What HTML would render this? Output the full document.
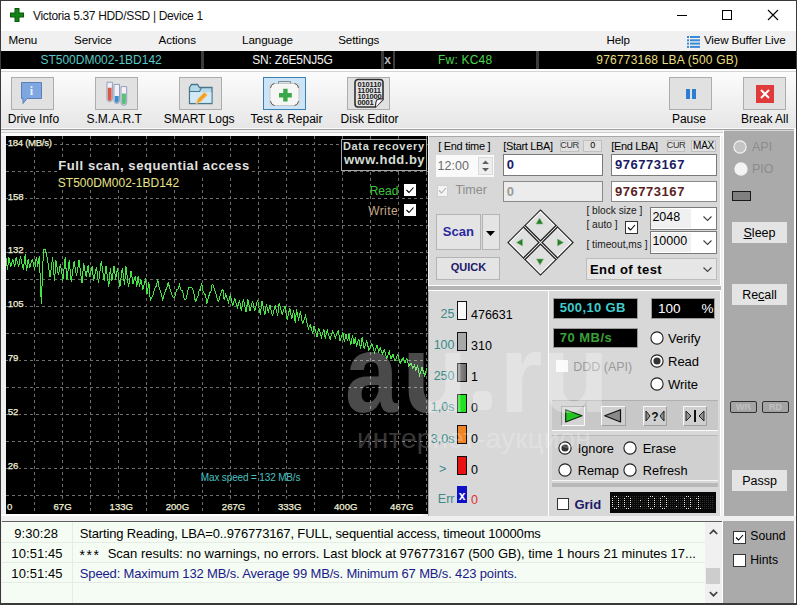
<!DOCTYPE html>
<html><head><meta charset="utf-8">
<style>
*{box-sizing:border-box;margin:0;padding:0}
html,body{width:797px;height:605px;overflow:hidden;background:#f0f0f0;font-family:"Liberation Sans",sans-serif;font-size:12px;color:#000;-webkit-font-smoothing:antialiased}
.a{position:absolute}
.t{position:absolute;white-space:pre;line-height:1}
svg{position:absolute;overflow:visible}
</style></head><body>
<div class="a" style="left:0px;top:0px;width:797px;height:605px;background:#3a3a3a"></div>
<div class="a" style="left:1px;top:1px;width:795px;height:602px;background:#f0f0f0"></div>
<div class="a" style="left:1px;top:1px;width:795px;height:30px;background:#fff"></div>
<svg style="left:10px;top:8px" width="14" height="14" viewBox="0 0 14 14"><path d="M4.5 0h5v4.5H14v5H9.5V14h-5V9.5H0v-5h4.5z" fill="#0a5a0a"/><path d="M5.5 1h3v4.5H13v3H8.5V13h-3V8.5H1v-3h4.5z" fill="#138413"/></svg>
<div class="t" style="top:9.64px;font-size:12px;color:#111;left:33px;letter-spacing:-0.33px;">Victoria 5.37 HDD/SSD | Device 1</div>
<div class="a" style="left:677px;top:15px;width:10px;height:1px;background:#000"></div>
<div class="a" style="left:722px;top:10px;width:10px;height:10px;border:1px solid #000"></div>
<svg style="left:768px;top:10px" width="10" height="10"><path d="M0 0L10 10M10 0L0 10" stroke="#000" stroke-width="1.1"/></svg>
<div class="t" style="top:34.18px;font-size:11.6px;color:#000;left:8.5px;letter-spacing:-0.1px;">Menu</div>
<div class="t" style="top:34.18px;font-size:11.6px;color:#000;left:74px;letter-spacing:-0.1px;">Service</div>
<div class="t" style="top:34.18px;font-size:11.6px;color:#000;left:158.6px;letter-spacing:-0.1px;">Actions</div>
<div class="t" style="top:34.18px;font-size:11.6px;color:#000;left:242.1px;letter-spacing:-0.1px;">Language</div>
<div class="t" style="top:34.18px;font-size:11.6px;color:#000;left:338.2px;letter-spacing:-0.1px;">Settings</div>
<div class="t" style="top:34.18px;font-size:11.6px;color:#000;left:606.4px;letter-spacing:-0.1px;">Help</div>
<div class="t" style="top:34.18px;font-size:11.6px;color:#000;left:703.9px;letter-spacing:-0.1px;">View Buffer Live</div>
<svg style="left:687px;top:36px" width="13" height="12"><g fill="#3a8ad8"><rect x="0" y="0.0" width="2" height="2"/><rect x="3" y="0.0" width="10" height="2"/><rect x="0" y="3.3" width="2" height="2"/><rect x="3" y="3.3" width="10" height="2"/><rect x="0" y="6.6" width="2" height="2"/><rect x="3" y="6.6" width="10" height="2"/><rect x="0" y="9.9" width="2" height="2"/><rect x="3" y="9.9" width="10" height="2"/></g></svg>
<div class="a" style="left:1px;top:51px;width:795px;height:18px;background:#000"></div>
<div class="a" style="left:201px;top:51px;width:3px;height:18px;background:#3c3c3c"></div>
<div class="a" style="left:381px;top:51px;width:3px;height:18px;background:#3c3c3c"></div>
<div class="a" style="left:393px;top:51px;width:2px;height:18px;background:#3c3c3c"></div>
<div class="a" style="left:536px;top:51px;width:3px;height:18px;background:#3c3c3c"></div>
<div class="t" style="top:54.44px;font-size:12px;color:#5ac8c6;left:40.4px;">ST500DM002-1BD142</div>
<div class="t" style="top:54.44px;font-size:12px;color:#f4f4f4;left:252.3px;letter-spacing:-0.2px;">SN: Z6E5NJ5G</div>
<div class="t" style="top:54.44px;font-size:12px;color:#b4b4b4;font-weight:700;left:384.2px;">x</div>
<div class="t" style="top:54.44px;font-size:12px;color:#4ad64a;left:438px;letter-spacing:0.2px;">Fw: KC48</div>
<div class="t" style="top:54.44px;font-size:12px;color:#eadf80;left:596.3px;letter-spacing:0.2px;">976773168 LBA (500 GB)</div>
<div class="a" style="left:1px;top:69px;width:795px;height:60px;background:linear-gradient(#fdfdfd,#e6e6e6)"></div>
<div class="a" style="left:1px;top:69px;width:795px;height:1px;background:#fff"></div>
<div class="a" style="left:1px;top:71px;width:795px;height:1px;background:#d4d4d4"></div>
<div class="a" style="left:1px;top:128px;width:795px;height:1px;background:#fafafa"></div>
<div class="a" style="left:1px;top:129px;width:795px;height:1px;background:#a0a0a0"></div>
<div class="a" style="left:1px;top:130px;width:795px;height:6px;background:#f0f0f0"></div>
<div class="a" style="left:1px;top:132px;width:722px;height:1px;background:#cfcfcf"></div>
<div class="a" style="left:1px;top:133px;width:722px;height:3px;background:#fbfbfb"></div>
<div class="a" style="left:11px;top:77px;width:43px;height:33px;background:#e1e1e1;border:1px solid #adadad"></div>
<div class="t" style="top:113.04px;font-size:12px;color:#000;left:33.45px;transform:translateX(-50%);">Drive Info</div>
<div class="a" style="left:95px;top:77px;width:43px;height:33px;background:#e1e1e1;border:1px solid #adadad"></div>
<div class="t" style="top:113.04px;font-size:12px;color:#000;left:114.2px;transform:translateX(-50%);">S.M.A.R.T</div>
<div class="a" style="left:179px;top:77px;width:43px;height:33px;background:#e1e1e1;border:1px solid #adadad"></div>
<div class="t" style="top:113.04px;font-size:12px;color:#000;left:199.10000000000002px;transform:translateX(-50%);">SMART Logs</div>
<div class="a" style="left:263px;top:77px;width:43px;height:33px;background:#cce4f7;border:1px solid #3c7fb1"></div>
<div class="t" style="top:113.04px;font-size:12px;color:#000;left:286.5px;transform:translateX(-50%);">Test &amp; Repair</div>
<div class="a" style="left:347px;top:77px;width:43px;height:33px;background:#e1e1e1;border:1px solid #adadad"></div>
<div class="t" style="top:113.04px;font-size:12px;color:#000;left:369.6px;transform:translateX(-50%);">Disk Editor</div>
<div class="a" style="left:669px;top:77px;width:43px;height:33px;background:#e1e1e1;border:1px solid #adadad"></div>
<div class="t" style="top:113.04px;font-size:12px;color:#000;left:688.9000000000001px;transform:translateX(-50%);">Pause</div>
<div class="a" style="left:743px;top:77px;width:43px;height:33px;background:#e1e1e1;border:1px solid #adadad"></div>
<div class="t" style="top:113.04px;font-size:12px;color:#000;left:764.75px;transform:translateX(-50%);">Break All</div>
<svg style="left:21px;top:82px" width="22" height="23"><path d="M0.5 0.5h20v16H6l-4 5v-5H0.5z" fill="#7ea6e0" stroke="#5a7fb8"/><text x="10.5" y="13" font-family="Liberation Serif" font-size="12" font-weight="bold" fill="#e8f0ff" text-anchor="middle">i</text></svg>
<svg style="left:104px;top:80px" width="26" height="27"><path d="M3 2.2h5.4v16.700000000000003a2.7 2.7 0 0 1 -5.4 0z" fill="#f4f0fa" stroke="#8a96b0" stroke-width="0.9"/><path d="M3.8 7.8h3.8000000000000003v11.100000000000001a1.9000000000000001 1.9000000000000001 0 0 1 -3.8000000000000003 0z" fill="#d8584a"/><path d="M10 4.4h5.5v16.35a2.75 2.75 0 0 1 -5.5 0z" fill="#f4f0fa" stroke="#8a96b0" stroke-width="0.9"/><path d="M10.8 16h3.9v4.75a1.95 1.95 0 0 1 -3.9 0z" fill="#3a8ad0"/><path d="M17 6.6h5.699999999999999v15.949999999999998a2.8499999999999996 2.8499999999999996 0 0 1 -5.699999999999999 0z" fill="#f4f0fa" stroke="#8a96b0" stroke-width="0.9"/><path d="M17.8 13.5h4.1v9.049999999999999a2.05 2.05 0 0 1 -4.1 0z" fill="#58c07a"/></svg>
<svg style="left:188px;top:83px" width="26" height="22"><path d="M1.5 4.5l2-3h6l2 3h12.5v16H1.5z" fill="#b4d8ec" stroke="#4a7888" stroke-width="1.3"/><path d="M1.5 8.5h10l2-4" fill="none" stroke="#4a7888" stroke-width="1.1"/><path d="M2.2 9.2h21.2v10.6H2.2z" fill="#d2eaf8"/><path d="M8 20.5l1.5-4.5 7-7 3 3-7 7z" fill="#f0a028" stroke="#f8d8a0" stroke-width="0.8"/></svg>
<svg style="left:268px;top:79px" width="34" height="29"><rect x="2" y="4.5" width="29" height="22" rx="2.5" fill="#f6f6f4" stroke="#c8c8c8"/><path d="M10.5 4.5v-2h12v2" fill="none" stroke="#8a8a8a"/><path d="M2.5 9a5 5 0 0 1 4-4.5M30.5 9a5 5 0 0 0-4-4.5M2.5 22a5 5 0 0 0 4 4.5M30.5 22a5 5 0 0 1-4 4.5" fill="none" stroke="#505050" stroke-width="0.9"/><path d="M15.2 9.8h4.4v4.2h4.2v4.4h-4.2v4.2h-4.4v-4.2H11v-4.4h4.2z" fill="#3aa84a"/></svg>
<svg style="left:354px;top:78px" width="32" height="31"><path d="M4 1.5h22a3 3 0 0 1 3 3v17l-7.5 7.5H4a3 3 0 0 1-3-3v-21.5a3 3 0 0 1 3-3z" fill="#e4e4e4" stroke="#303030" stroke-width="1.6"/><path d="M21.5 29.5c0-4 0-7 2-8s4-0.5 5.5-0.5" fill="#fafafa" stroke="#303030" stroke-width="1.2"/><g font-family="Liberation Sans" font-weight="bold" font-size="7.6" fill="#1a1a1a" letter-spacing="-0.2"><text x="3.5" y="8.5">010110</text><text x="3.5" y="14.5">110011</text><text x="3.5" y="20.5">101000</text><text x="3.5" y="26.5">0001</text></g></svg>
<div class="a" style="left:686px;top:88.6px;width:4px;height:10.5px;background:#2a7fd4"></div>
<div class="a" style="left:692px;top:88.6px;width:4px;height:10.5px;background:#2a7fd4"></div>
<svg style="left:756px;top:85px" width="18" height="18"><rect width="18" height="18" fill="#e03a3a"/><path d="M5 5L13 13M13 5L5 13" stroke="#fff" stroke-width="2"/></svg>
<svg style="left:6px;top:136px;background:#000" width="422" height="378"><g stroke="#6e6e6e" stroke-width="1" stroke-dasharray="3 3"><line x1="0" y1="8.5" x2="422" y2="8.5"/><line x1="0" y1="35.5" x2="422" y2="35.5"/><line x1="0" y1="62.5" x2="422" y2="62.5"/><line x1="0" y1="89.5" x2="422" y2="89.5"/><line x1="0" y1="116.5" x2="422" y2="116.5"/><line x1="0" y1="143.5" x2="422" y2="143.5"/><line x1="0" y1="170.5" x2="422" y2="170.5"/><line x1="0" y1="197.5" x2="422" y2="197.5"/><line x1="0" y1="224.5" x2="422" y2="224.5"/><line x1="0" y1="251.5" x2="422" y2="251.5"/><line x1="0" y1="278.5" x2="422" y2="278.5"/><line x1="0" y1="305.5" x2="422" y2="305.5"/><line x1="0" y1="332.5" x2="422" y2="332.5"/><line x1="0" y1="359.5" x2="422" y2="359.5"/><line x1="28.5" y1="0" x2="28.5" y2="378"/><line x1="56.5" y1="0" x2="56.5" y2="378"/><line x1="84.5" y1="0" x2="84.5" y2="378"/><line x1="112.5" y1="0" x2="112.5" y2="378"/><line x1="140.5" y1="0" x2="140.5" y2="378"/><line x1="168.5" y1="0" x2="168.5" y2="378"/><line x1="196.5" y1="0" x2="196.5" y2="378"/><line x1="224.5" y1="0" x2="224.5" y2="378"/><line x1="252.5" y1="0" x2="252.5" y2="378"/><line x1="280.5" y1="0" x2="280.5" y2="378"/><line x1="308.5" y1="0" x2="308.5" y2="378"/><line x1="336.5" y1="0" x2="336.5" y2="378"/><line x1="364.5" y1="0" x2="364.5" y2="378"/><line x1="392.5" y1="0" x2="392.5" y2="378"/><line x1="420.5" y1="0" x2="420.5" y2="378"/></g><polyline points="0.0,122.0 1.5,134.0 2.8,120.7 4.7,130.5 6.8,123.6 8.8,130.6 10.1,121.4 12.8,130.9 14.4,120.2 17.3,133.5 19.2,118.1 20.5,135.2 22.2,123.0 23.6,132.0 26.3,122.8 28.6,133.9 30.4,120.6 31.7,130.5 33.3,119.9 35.3,168.0 37.5,113.0 39.3,113.0 41.7,124.7 44.0,141.0 46.7,121.5 48.5,145.4 49.9,124.4 52.4,138.8 54.5,128.1 56.9,144.5 59.2,121.3 60.9,144.4 63.2,124.2 65.2,146.1 68.1,125.5 70.5,139.9 73.0,124.4 76.0,147.3 77.7,127.2 80.1,140.6 82.1,129.5 83.5,141.3 86.1,130.2 87.7,144.8 90.5,131.0 92.5,146.7 95.3,124.9 98.1,144.8 100.0,130.0 102.8,150.9 104.3,132.3 105.9,145.0 108.0,129.6 109.6,143.5 111.6,132.1 113.8,151.3 116.3,131.9 118.6,149.4 119.9,129.8 122.5,151.0 125.1,135.0 127.0,147.6 129.4,140.1 130.7,150.8 132.2,139.8 133.5,151.2 134.9,143.3 136.8,153.6 139.6,142.3 141.0,158.2 142.9,146.3 144.3,164.8 147.3,158.8 148.5,153.0 149.5,151.1 150.6,150.1 151.6,143.3 153.1,151.0 154.2,154.5 155.1,157.4 156.7,164.4 158.0,159.2 159.2,155.0 160.6,152.2 162.1,146.5 163.1,149.7 164.7,155.2 166.2,159.9 167.6,161.7 168.9,160.8 169.8,156.2 170.9,153.8 172.3,152.9 173.5,148.9 175.1,154.2 176.2,154.3 177.3,157.7 178.3,163.4 179.9,163.9 181.1,158.9 182.6,151.4 183.9,151.2 185.4,151.4 186.6,152.7 188.1,158.3 189.5,166.3 190.7,162.8 192.3,159.4 193.3,153.1 194.3,153.8 195.7,146.9 197.2,156.0 198.6,157.4 199.9,160.6 200.8,167.8 202.1,162.6 203.7,157.2 205.2,154.3 206.2,148.0 207.4,150.0 208.7,154.5 209.9,157.8 211.4,164.0 212.6,165.2 214.1,159.5 215.7,154.9 217.0,153.7 218.2,164.2 219.7,158.4 222.4,166.2 224.4,158.6 226.6,170.2 228.8,162.6 231.4,171.3 233.6,164.6 235.3,175.1 237.4,163.4 240.0,176.4 241.9,163.5 244.1,174.9 246.5,164.7 248.7,175.2 251.6,164.0 254.3,178.6 256.0,165.5 258.9,178.9 260.4,168.5 262.3,175.5 264.0,169.4 266.4,179.9 269.2,169.9 271.7,180.1 273.1,166.7 276.1,178.6 279.0,170.3 281.1,183.4 283.8,172.3 285.8,182.8 287.6,174.0 289.3,186.6 290.6,173.3 292.6,184.7 294.4,174.8 296.5,188.0 299.5,179.5 302.4,193.1 304.1,188.4 306.7,197.4 308.1,189.8 311.0,201.1 312.6,191.9 315.5,201.0 317.9,193.3 319.2,202.5 321.2,194.0 324.1,203.3 326.7,195.0 329.5,201.7 332.2,194.1 334.0,205.2 336.9,196.2 338.3,206.3 340.0,198.2 341.5,204.9 343.0,198.4 344.8,209.4 346.5,198.9 348.0,208.4 349.3,201.1 350.5,210.9 352.7,202.7 354.7,213.1 356.1,201.4 358.1,212.2 360.8,205.1 362.9,214.5 365.9,207.3 368.6,216.7 370.9,209.1 372.7,215.8 374.2,211.7 376.7,218.2 378.2,213.3 380.9,222.7 383.3,215.5 385.0,222.9 387.0,218.2 389.0,225.3 391.9,218.1 394.1,227.3 397.1,221.5 398.9,227.0 400.8,222.4 402.9,230.3 405.0,227.0 406.7,232.4 408.6,229.3 409.8,235.2 411.4,229.4 413.6,239.2 416.0,231.5 418.8,239.9 420.6,232.5" fill="none" stroke="#44e444" stroke-width="1" shape-rendering="crispEdges"/></svg>
<div class="t" style="top:137.87px;font-size:9.6px;color:#f0f0d8;left:7.7px;letter-spacing:-0.3px;-webkit-text-stroke:0.25px #f0f0d8;background:#000;padding-right:1px;">184 (MB/s)</div>
<div class="t" style="top:191.57px;font-size:9.6px;color:#f0f0d8;left:7.7px;-webkit-text-stroke:0.25px #f0f0d8;background:#000;padding-right:1px;">158</div>
<div class="t" style="top:245.47px;font-size:9.6px;color:#f0f0d8;left:7.7px;-webkit-text-stroke:0.25px #f0f0d8;background:#000;padding-right:1px;">132</div>
<div class="t" style="top:299.27px;font-size:9.6px;color:#f0f0d8;left:7.7px;-webkit-text-stroke:0.25px #f0f0d8;background:#000;padding-right:1px;">105</div>
<div class="t" style="top:353.17px;font-size:9.6px;color:#f0f0d8;left:7.7px;-webkit-text-stroke:0.25px #f0f0d8;background:#000;padding-right:1px;">79</div>
<div class="t" style="top:407.07px;font-size:9.6px;color:#f0f0d8;left:7.7px;-webkit-text-stroke:0.25px #f0f0d8;background:#000;padding-right:1px;">52</div>
<div class="t" style="top:460.87px;font-size:9.6px;color:#f0f0d8;left:7.7px;-webkit-text-stroke:0.25px #f0f0d8;background:#000;padding-right:1px;">26</div>
<div class="t" style="top:502.17px;font-size:9.6px;color:#f0f0d8;left:7px;-webkit-text-stroke:0.25px #f0f0d8;background:#000;padding-right:1px;">0</div>
<div class="t" style="top:502.17px;font-size:9.6px;color:#f0f0d8;left:52.5px;background:#000;padding:0 1px;-webkit-text-stroke:0.25px #f0f0d8;">67G</div>
<div class="t" style="top:502.17px;font-size:9.6px;color:#f0f0d8;left:108.6px;background:#000;padding:0 1px;-webkit-text-stroke:0.25px #f0f0d8;">133G</div>
<div class="t" style="top:502.17px;font-size:9.6px;color:#f0f0d8;left:164.7px;background:#000;padding:0 1px;-webkit-text-stroke:0.25px #f0f0d8;">200G</div>
<div class="t" style="top:502.17px;font-size:9.6px;color:#f0f0d8;left:220.8px;background:#000;padding:0 1px;-webkit-text-stroke:0.25px #f0f0d8;">267G</div>
<div class="t" style="top:502.17px;font-size:9.6px;color:#f0f0d8;left:276.9px;background:#000;padding:0 1px;-webkit-text-stroke:0.25px #f0f0d8;">333G</div>
<div class="t" style="top:502.17px;font-size:9.6px;color:#f0f0d8;left:333.0px;background:#000;padding:0 1px;-webkit-text-stroke:0.25px #f0f0d8;">400G</div>
<div class="t" style="top:502.17px;font-size:9.6px;color:#f0f0d8;left:389.1px;background:#000;padding:0 1px;-webkit-text-stroke:0.25px #f0f0d8;">467G</div>
<div class="t" style="top:159.30px;font-size:13px;color:#e0e0e0;font-weight:700;left:58.2px;letter-spacing:0.6px;background:#000;padding-bottom:3px;">Full scan, sequential access</div>
<div class="t" style="top:176.74px;font-size:12px;color:#e8e488;left:57.8px;background:#000;">ST500DM002-1BD142</div>
<div class="a" style="left:340.5px;top:138.5px;width:86px;height:32px;border:1px solid #a8a8a8;background:#000"></div>
<div class="t" style="top:141.39px;font-size:11px;color:#d4dcd4;font-weight:700;left:342.9px;letter-spacing:0.7px;">Data recovery</div>
<div class="t" style="top:153.20px;font-size:13px;color:#d4dcd4;font-weight:700;left:344px;letter-spacing:0.5px;">www.hdd.by</div>
<div class="t" style="top:184.54px;font-size:12px;color:#3ec43e;right:398.7px;">Read</div>
<div class="t" style="top:204.64px;font-size:12px;color:#c8a888;right:399px;letter-spacing:0.4px;">Write</div>
<svg style="left:404px;top:183.5px" width="12" height="12"><rect x="0" y="0" width="12" height="12" fill="#fff"/><path d="M2.5 6l2.5 2.5 4.5-5" fill="none" stroke="#000" stroke-width="1.1"/></svg>
<svg style="left:404px;top:203.5px" width="12" height="12"><rect x="0" y="0" width="12" height="12" fill="#fff"/><path d="M2.5 6l2.5 2.5 4.5-5" fill="none" stroke="#000" stroke-width="1.1"/></svg>
<div class="t" style="top:472.54px;font-size:10px;color:#48c0c0;left:200.8px;letter-spacing:-0.15px;">Max speed = 132 MB/s</div>
<div class="a" style="left:428px;top:136px;width:293px;height:150px;background:#d8d8d8;border-top:1px solid #a8a8a8;border-left:1px solid #a8a8a8"></div>
<div class="a" style="left:428px;top:136px;width:1px;height:380px;background:#f2f2f2"></div>
<div class="a" style="left:720px;top:136px;width:1px;height:150px;background:#fff"></div>
<div class="t" style="top:141.19px;font-size:11px;color:#000;left:438.2px;letter-spacing:-0.3px;">[ End time ]</div>
<div class="t" style="top:140.69px;font-size:11px;color:#000;left:503.3px;letter-spacing:-0.35px;">[Start LBA]</div>
<div class="t" style="top:140.69px;font-size:11px;color:#000;left:611.3px;letter-spacing:-0.35px;">[End LBA]</div>
<div class="a" style="left:560px;top:139.5px;width:19px;height:12px;background:#e0e0e0;border:1px solid #c0c0c0"></div>
<div class="t" style="top:141.38px;font-size:9px;color:#333;left:569.5px;transform:translateX(-50%);letter-spacing:-0.3px;">CUR</div>
<div class="a" style="left:583px;top:139.5px;width:19px;height:12px;background:#e0e0e0;border:1px solid #c0c0c0"></div>
<div class="t" style="top:141.38px;font-size:9px;color:#000;left:592.5px;transform:translateX(-50%);letter-spacing:-0.3px;">0</div>
<div class="a" style="left:667px;top:139.5px;width:18px;height:12px;background:#e0e0e0;border:1px solid #c0c0c0"></div>
<div class="t" style="top:141.38px;font-size:9px;color:#333;left:676.0px;transform:translateX(-50%);letter-spacing:-0.3px;">CUR</div>
<div class="a" style="left:691px;top:139.5px;width:25px;height:12px;background:#e0e0e0;border:1px solid #c0c0c0"></div>
<div class="t" style="top:140.53px;font-size:10px;color:#000;left:703.5px;transform:translateX(-50%);letter-spacing:-0.3px;">MAX</div>
<div class="a" style="left:436px;top:155px;width:58px;height:22px;background:#fafafa"></div>
<div class="a" style="left:478px;top:157px;width:15px;height:18px;background:#eeeeee;border:1px solid #dadada"></div>
<svg style="left:481px;top:159px" width="9" height="14"><path d="M1 5L4.5 1.5 8 5z M1 9L4.5 12.5 8 9z" fill="#606060"/></svg>
<div class="t" style="top:159.72px;font-size:12.5px;color:#6a6a6a;left:437.6px;">12:00</div>
<div class="a" style="left:436.5px;top:185px;width:11.5px;height:11.5px;background:#f4f4f4;border:1px solid #d0d0d0"></div>
<svg style="left:437px;top:185px" width="11" height="11"><path d="M2 5.5l2.5 2.5 4.5-5" fill="none" stroke="#b0b0b0" stroke-width="1.1"/></svg>
<div class="t" style="top:184.22px;font-size:12.5px;color:#8c8c8c;left:455.4px;">Timer</div>
<div class="a" style="left:503px;top:154px;width:100px;height:22px;background:#fff;border:1px solid #7a7a7a"></div>
<div class="a" style="left:503px;top:180.5px;width:100px;height:21px;background:#ececec;border:1px solid #8a8a8a"></div>
<div class="a" style="left:611px;top:154px;width:106px;height:22px;background:#fff;border:1px solid #7a7a7a"></div>
<div class="a" style="left:611px;top:180.5px;width:106px;height:21px;background:#fff;border:1px solid #8a8a8a"></div>
<div class="t" style="top:158.00px;font-size:13px;color:#1a1a66;font-weight:700;left:506.8px;">0</div>
<div class="t" style="top:184.50px;font-size:13px;color:#9a9a9a;font-weight:700;left:506.8px;">0</div>
<div class="t" style="top:157.90px;font-size:13px;color:#1a1a66;font-weight:700;left:614.9px;letter-spacing:0.55px;">976773167</div>
<div class="t" style="top:184.50px;font-size:13px;color:#5a1e1e;font-weight:700;left:614.9px;letter-spacing:0.55px;">976773167</div>
<div class="a" style="left:436px;top:214px;width:45px;height:36px;background:#e4e4e4;border:1px solid #b4b4b4"></div>
<div class="a" style="left:482px;top:214px;width:18px;height:36px;background:#e4e4e4;border:1px solid #b4b4b4"></div>
<div class="a" style="left:436px;top:257px;width:64px;height:23px;background:#e4e4e4;border:1px solid #b4b4b4"></div>
<div class="t" style="top:225.00px;font-size:13px;color:#2828a0;font-weight:700;left:458.3px;transform:translateX(-50%);">Scan</div>
<svg style="left:486px;top:231px" width="9" height="5"><path d="M0 0h9L4.5 5z" fill="#000"/></svg>
<div class="t" style="top:262.39px;font-size:11px;color:#1a1a66;font-weight:700;left:468.5px;transform:translateX(-50%);">QUICK</div>
<svg style="left:507px;top:209px" width="67" height="67" viewBox="-33.5 -33.5 67 67"><g transform="rotate(45)"><rect x="-23" y="-23" width="46" height="46" fill="#e0e0e0" stroke="#1a1a1a" stroke-width="1.1"/><rect x="-21.7" y="-21.7" width="43.4" height="43.4" fill="none" stroke="#f6f6f6" stroke-width="1"/><rect x="-1.7" y="-23" width="3.4" height="46" fill="#1a1a1a"/><rect x="-23" y="-1.7" width="46" height="3.4" fill="#1a1a1a"/><rect x="-0.5" y="-23" width="1" height="46" fill="#f4f4f4"/><rect x="-23" y="-0.5" width="46" height="1" fill="#f4f4f4"/></g><g fill="#2a7a2a" stroke="#7ac07a" stroke-width="0.6"><path d="M-1 -24.5l3.5 6h-7z"/><path d="M-24 0l6 -3.5v7z"/><path d="M23 0l-6 -3.5v7z"/><path d="M-0.5 22.5l3.5 -6h-7z"/></g></svg>
<div class="t" style="top:206.27px;font-size:10.2px;color:#202020;left:586.4px;">[ block size ]</div>
<div class="t" style="top:220.37px;font-size:10.2px;color:#202020;left:586.4px;">[ auto ]</div>
<svg style="left:625px;top:220.5px" width="13" height="13"><rect x="0.5" y="0.5" width="12" height="12" fill="#fff" stroke="#333"/><path d="M3 6.5l2.5 2.5 4.5-5" fill="none" stroke="#000" stroke-width="1.1"/></svg>
<div class="t" style="top:239.57px;font-size:10.2px;color:#202020;left:586.4px;">[ timeout,ms ]</div>
<div class="a" style="left:649.5px;top:206.5px;width:67px;height:23px;background:#fff;border:1px solid #7a7a7a"></div>
<div class="a" style="left:651px;top:208.5px;width:40px;height:19px;background:#f0f0f0"></div>
<div class="t" style="top:211.32px;font-size:12.5px;color:#000;left:652.4px;">2048</div>
<svg style="left:703px;top:215.5px" width="9" height="5"><path d="M0.5 0.5L4.5 4.5 8.5 0.5" fill="none" stroke="#404040" stroke-width="1.1"/></svg>
<div class="a" style="left:649.5px;top:230.5px;width:67px;height:23px;background:#fff;border:1px solid #7a7a7a"></div>
<div class="a" style="left:651px;top:232.5px;width:40px;height:19px;background:#f0f0f0"></div>
<div class="t" style="top:235.32px;font-size:12.5px;color:#000;left:652.4px;">10000</div>
<svg style="left:703px;top:239.5px" width="9" height="5"><path d="M0.5 0.5L4.5 4.5 8.5 0.5" fill="none" stroke="#404040" stroke-width="1.1"/></svg>
<div class="a" style="left:585.5px;top:257.8px;width:131px;height:22.5px;background:#e6e6e6;border:1px solid #bcbcbc"></div>
<div class="t" style="top:262.60px;font-size:13px;color:#000;font-weight:700;left:590px;letter-spacing:0.45px;">End of test</div>
<svg style="left:703px;top:267px" width="9" height="5"><path d="M0.5 0.5L4.5 4.5 8.5 0.5" fill="none" stroke="#404040" stroke-width="1.1"/></svg>
<div class="a" style="left:428px;top:285px;width:293px;height:1px;background:#fff"></div>
<div class="a" style="left:428px;top:286px;width:293px;height:4px;background:#b4b4b4"></div>
<div class="a" style="left:428px;top:290px;width:293px;height:1px;background:#fff"></div>
<div class="a" style="left:428px;top:291px;width:121px;height:225px;background:#d8d8d8;border-left:1px solid #a8a8a8"></div>
<div class="a" style="left:548px;top:291px;width:1px;height:225px;background:#fff"></div>
<div class="a" style="left:549px;top:291px;width:172px;height:225px;background:#d8d8d8"></div>
<div class="a" style="left:720px;top:291px;width:1px;height:225px;background:#fff"></div>
<div class="a" style="left:457px;top:300.8px;width:10px;height:19px;background:#fafafa;border:1px solid #111"></div>
<div class="t" style="top:308.22px;font-size:12.5px;color:#3a8a8a;right:342.5px;">25</div>
<div class="t" style="top:308.72px;font-size:12.5px;color:#000;left:471px;">476631</div>
<div class="a" style="left:457px;top:332px;width:10px;height:19px;background:#a8a8a8;border:1px solid #111"></div>
<div class="t" style="top:339.42px;font-size:12.5px;color:#3a8a8a;right:342.5px;">100</div>
<div class="t" style="top:339.92px;font-size:12.5px;color:#000;left:471px;">310</div>
<div class="a" style="left:457px;top:363px;width:10px;height:19px;background:linear-gradient(90deg,#909090,#6a6a6a);border:1px solid #111"></div>
<div class="t" style="top:370.42px;font-size:12.5px;color:#3a8a8a;right:342.5px;">250</div>
<div class="t" style="top:370.92px;font-size:12.5px;color:#000;left:471px;">1</div>
<div class="a" style="left:457px;top:394px;width:10px;height:19px;background:#22e022;border:1px solid #111"></div>
<div class="t" style="top:401.42px;font-size:12.5px;color:#3a8a8a;right:342.5px;">1,0s</div>
<div class="t" style="top:401.92px;font-size:12.5px;color:#000;left:471px;">0</div>
<div class="a" style="left:457px;top:425.2px;width:10px;height:19px;background:#f08424;border:1px solid #111"></div>
<div class="t" style="top:432.62px;font-size:12.5px;color:#3a8a8a;right:342.5px;">3,0s</div>
<div class="t" style="top:433.12px;font-size:12.5px;color:#000;left:471px;">0</div>
<div class="a" style="left:457px;top:456.3px;width:10px;height:19px;background:#e81212;border:1px solid #111"></div>
<div class="t" style="top:462.72px;font-size:12.5px;color:#3a8a8a;left:439px;">&gt;</div>
<div class="t" style="top:464.22px;font-size:12.5px;color:#000;left:471px;">0</div>
<div class="a" style="left:457px;top:486px;width:10px;height:17px;background:#1010c8"></div>
<div class="t" style="top:489.84px;font-size:12px;color:#fff;font-weight:700;left:462px;transform:translateX(-50%);">x</div>
<div class="t" style="top:493.42px;font-size:12.5px;color:#3a8a8a;right:342.5px;">Err</div>
<div class="t" style="top:493.92px;font-size:12.5px;color:#e03030;left:471px;">0</div>
<div class="a" style="left:552.5px;top:298px;width:85.5px;height:20.5px;background:#000;border:1px solid #9a9a9a"></div>
<div class="t" style="top:300.80px;font-size:13px;color:#40cccc;font-weight:700;left:559.7px;letter-spacing:0.35px;">500,10 GB</div>
<div class="a" style="left:650.5px;top:298px;width:64.5px;height:20.5px;background:#000;border:1px solid #9a9a9a"></div>
<div class="t" style="top:301.77px;font-size:13.5px;color:#fff;left:657.9px;">100</div>
<div class="t" style="top:301.77px;font-size:13.5px;color:#fff;left:701.5px;">%</div>
<div class="a" style="left:552.5px;top:327.5px;width:85.5px;height:20.5px;background:#000;border:1px solid #9a9a9a"></div>
<div class="t" style="top:330.80px;font-size:13px;color:#3aa03a;font-weight:700;left:559.7px;letter-spacing:0.5px;">70 MB/s</div>
<svg style="left:649.5px;top:331px" width="14" height="14"><circle cx="7" cy="7" r="6.1" fill="#fff" stroke="#222" stroke-width="1.15"/></svg>
<div class="t" style="top:332.30px;font-size:13px;color:#000;left:668px;">Verify</div>
<svg style="left:649.5px;top:354.1px" width="14" height="14"><circle cx="7" cy="7" r="6.1" fill="#fff" stroke="#222" stroke-width="1.15"/><circle cx="7" cy="7" r="3.6" fill="#333"/></svg>
<div class="t" style="top:355.40px;font-size:13px;color:#000;left:668px;">Read</div>
<svg style="left:649.5px;top:376.7px" width="14" height="14"><circle cx="7" cy="7" r="6.1" fill="#fff" stroke="#222" stroke-width="1.15"/></svg>
<div class="t" style="top:378.00px;font-size:13px;color:#000;left:668px;">Write</div>
<div class="a" style="left:556px;top:360px;width:12px;height:11.5px;background:#fafafa"></div>
<div class="t" style="top:361.42px;font-size:12.5px;color:#9a9a9a;left:573.2px;">DDD (API)</div>
<div class="a" style="left:552px;top:400px;width:166px;height:31px;background:#c8c8c8;border-top:1px solid #b0b0b0;border-bottom:1px solid #fafafa"></div>
<div class="a" style="left:560.5px;top:406px;width:24.5px;height:19.5px;background:#d4d4d4;border-top:1px solid #9a9a9a;border-left:1px solid #9a9a9a;border-bottom:1px solid #fafafa;border-right:1px solid #fafafa"></div>
<div class="a" style="left:601px;top:406px;width:24.5px;height:19.5px;background:#cfcfcf;border-top:1px solid #fafafa;border-left:1px solid #fafafa;border-bottom:1px solid #a0a0a0;border-right:1px solid #a0a0a0"></div>
<div class="a" style="left:642.5px;top:406px;width:24.5px;height:19.5px;background:#cfcfcf;border-top:1px solid #fafafa;border-left:1px solid #fafafa;border-bottom:1px solid #a0a0a0;border-right:1px solid #a0a0a0"></div>
<div class="a" style="left:682.5px;top:406px;width:24.5px;height:19.5px;background:#cfcfcf;border-top:1px solid #fafafa;border-left:1px solid #fafafa;border-bottom:1px solid #a0a0a0;border-right:1px solid #a0a0a0"></div>
<svg style="left:565px;top:409px" width="18" height="14"><path d="M0.7 0.7L17 6.8 0.7 13z" fill="#22c422" stroke="#0a2a0a" stroke-width="1.2" stroke-linejoin="round"/></svg>
<svg style="left:604px;top:409px" width="18" height="14"><path d="M16.5 0.7L0.7 6.8 16.5 13z" fill="#8a8a8a" stroke="#101010" stroke-width="1.2" stroke-linejoin="round"/></svg>
<svg style="left:645px;top:409px" width="20" height="14"><path d="M1 2L5 7 1 12z M19 2L15 7 19 12z" fill="#909090" stroke="#202020" stroke-width="1"/><text x="10" y="12" font-family="Liberation Sans" font-weight="bold" font-size="12" text-anchor="middle" fill="#101010">?</text></svg>
<svg style="left:685px;top:409px" width="20" height="14"><path d="M1 2L6 7 1 12z M19 2L14 7 19 12z" fill="#909090" stroke="#202020" stroke-width="1"/><rect x="9" y="1" width="2" height="12" fill="#101010"/></svg>
<div class="a" style="left:552px;top:435px;width:166px;height:46px;background:#d0d0d0;border-top:1px solid #b8b8b8;border-bottom:1px solid #f4f4f4"></div>
<svg style="left:558.3px;top:441.3px" width="14" height="14"><circle cx="7" cy="7" r="6.1" fill="#fff" stroke="#222" stroke-width="1.15"/><circle cx="7" cy="7" r="3.6" fill="#333"/></svg>
<div class="t" style="top:442.76px;font-size:12.8px;color:#000;left:577.6999999999999px;">Ignore</div>
<svg style="left:623.4px;top:441.3px" width="14" height="14"><circle cx="7" cy="7" r="6.1" fill="#fff" stroke="#222" stroke-width="1.15"/></svg>
<div class="t" style="top:442.76px;font-size:12.8px;color:#000;left:642.8px;">Erase</div>
<svg style="left:558.3px;top:463.2px" width="14" height="14"><circle cx="7" cy="7" r="6.1" fill="#fff" stroke="#222" stroke-width="1.15"/></svg>
<div class="t" style="top:464.66px;font-size:12.8px;color:#000;left:577.6999999999999px;">Remap</div>
<svg style="left:623.4px;top:463.2px" width="14" height="14"><circle cx="7" cy="7" r="6.1" fill="#fff" stroke="#222" stroke-width="1.15"/></svg>
<div class="t" style="top:464.66px;font-size:12.8px;color:#000;left:642.8px;">Refresh</div>
<div class="a" style="left:552px;top:483px;width:166px;height:4px;background:#b8b8b8"></div>
<div class="a" style="left:556.5px;top:497.5px;width:12px;height:12px;background:#fff;border:1px solid #333"></div>
<div class="t" style="top:497.60px;font-size:13px;color:#1a1a66;font-weight:700;left:574.4px;">Grid</div>
<svg style="left:610px;top:491.5px" width="106" height="21"><rect width="106" height="21" fill="#080808"/><g fill="#303030"><rect x="2.0" y="4.0" width="1" height="1"/><rect x="2.0" y="6.0" width="1" height="1"/><rect x="2.0" y="8.0" width="1" height="1"/><rect x="2.0" y="10.0" width="1" height="1"/><rect x="2.0" y="12.0" width="1" height="1"/><rect x="2.0" y="14.0" width="1" height="1"/><rect x="2.0" y="16.0" width="1" height="1"/><rect x="4.0" y="4.0" width="1" height="1"/><rect x="4.0" y="6.0" width="1" height="1"/><rect x="4.0" y="8.0" width="1" height="1"/><rect x="4.0" y="10.0" width="1" height="1"/><rect x="4.0" y="12.0" width="1" height="1"/><rect x="4.0" y="14.0" width="1" height="1"/><rect x="4.0" y="16.0" width="1" height="1"/><rect x="6.0" y="4.0" width="1" height="1"/><rect x="6.0" y="6.0" width="1" height="1"/><rect x="6.0" y="8.0" width="1" height="1"/><rect x="6.0" y="10.0" width="1" height="1"/><rect x="6.0" y="12.0" width="1" height="1"/><rect x="6.0" y="14.0" width="1" height="1"/><rect x="6.0" y="16.0" width="1" height="1"/><rect x="8.0" y="4.0" width="1" height="1"/><rect x="8.0" y="6.0" width="1" height="1"/><rect x="8.0" y="8.0" width="1" height="1"/><rect x="8.0" y="10.0" width="1" height="1"/><rect x="8.0" y="12.0" width="1" height="1"/><rect x="8.0" y="14.0" width="1" height="1"/><rect x="8.0" y="16.0" width="1" height="1"/><rect x="10.0" y="4.0" width="1" height="1"/><rect x="10.0" y="6.0" width="1" height="1"/><rect x="10.0" y="8.0" width="1" height="1"/><rect x="10.0" y="10.0" width="1" height="1"/><rect x="10.0" y="12.0" width="1" height="1"/><rect x="10.0" y="14.0" width="1" height="1"/><rect x="10.0" y="16.0" width="1" height="1"/><rect x="12.0" y="4.0" width="1" height="1"/><rect x="12.0" y="6.0" width="1" height="1"/><rect x="12.0" y="8.0" width="1" height="1"/><rect x="12.0" y="10.0" width="1" height="1"/><rect x="12.0" y="12.0" width="1" height="1"/><rect x="12.0" y="14.0" width="1" height="1"/><rect x="12.0" y="16.0" width="1" height="1"/><rect x="14.0" y="4.0" width="1" height="1"/><rect x="14.0" y="6.0" width="1" height="1"/><rect x="14.0" y="8.0" width="1" height="1"/><rect x="14.0" y="10.0" width="1" height="1"/><rect x="14.0" y="12.0" width="1" height="1"/><rect x="14.0" y="14.0" width="1" height="1"/><rect x="14.0" y="16.0" width="1" height="1"/><rect x="16.0" y="4.0" width="1" height="1"/><rect x="16.0" y="6.0" width="1" height="1"/><rect x="16.0" y="8.0" width="1" height="1"/><rect x="16.0" y="10.0" width="1" height="1"/><rect x="16.0" y="12.0" width="1" height="1"/><rect x="16.0" y="14.0" width="1" height="1"/><rect x="16.0" y="16.0" width="1" height="1"/><rect x="18.0" y="4.0" width="1" height="1"/><rect x="18.0" y="6.0" width="1" height="1"/><rect x="18.0" y="8.0" width="1" height="1"/><rect x="18.0" y="10.0" width="1" height="1"/><rect x="18.0" y="12.0" width="1" height="1"/><rect x="18.0" y="14.0" width="1" height="1"/><rect x="18.0" y="16.0" width="1" height="1"/><rect x="20.0" y="4.0" width="1" height="1"/><rect x="20.0" y="6.0" width="1" height="1"/><rect x="20.0" y="8.0" width="1" height="1"/><rect x="20.0" y="10.0" width="1" height="1"/><rect x="20.0" y="12.0" width="1" height="1"/><rect x="20.0" y="14.0" width="1" height="1"/><rect x="20.0" y="16.0" width="1" height="1"/><rect x="22.0" y="4.0" width="1" height="1"/><rect x="22.0" y="6.0" width="1" height="1"/><rect x="22.0" y="8.0" width="1" height="1"/><rect x="22.0" y="10.0" width="1" height="1"/><rect x="22.0" y="12.0" width="1" height="1"/><rect x="22.0" y="14.0" width="1" height="1"/><rect x="22.0" y="16.0" width="1" height="1"/><rect x="24.0" y="4.0" width="1" height="1"/><rect x="24.0" y="6.0" width="1" height="1"/><rect x="24.0" y="8.0" width="1" height="1"/><rect x="24.0" y="10.0" width="1" height="1"/><rect x="24.0" y="12.0" width="1" height="1"/><rect x="24.0" y="14.0" width="1" height="1"/><rect x="24.0" y="16.0" width="1" height="1"/><rect x="26.0" y="4.0" width="1" height="1"/><rect x="26.0" y="6.0" width="1" height="1"/><rect x="26.0" y="8.0" width="1" height="1"/><rect x="26.0" y="10.0" width="1" height="1"/><rect x="26.0" y="12.0" width="1" height="1"/><rect x="26.0" y="14.0" width="1" height="1"/><rect x="26.0" y="16.0" width="1" height="1"/><rect x="28.0" y="4.0" width="1" height="1"/><rect x="28.0" y="6.0" width="1" height="1"/><rect x="28.0" y="8.0" width="1" height="1"/><rect x="28.0" y="10.0" width="1" height="1"/><rect x="28.0" y="12.0" width="1" height="1"/><rect x="28.0" y="14.0" width="1" height="1"/><rect x="28.0" y="16.0" width="1" height="1"/><rect x="30.0" y="4.0" width="1" height="1"/><rect x="30.0" y="6.0" width="1" height="1"/><rect x="30.0" y="8.0" width="1" height="1"/><rect x="30.0" y="10.0" width="1" height="1"/><rect x="30.0" y="12.0" width="1" height="1"/><rect x="30.0" y="14.0" width="1" height="1"/><rect x="30.0" y="16.0" width="1" height="1"/><rect x="32.0" y="4.0" width="1" height="1"/><rect x="32.0" y="6.0" width="1" height="1"/><rect x="32.0" y="8.0" width="1" height="1"/><rect x="32.0" y="10.0" width="1" height="1"/><rect x="32.0" y="12.0" width="1" height="1"/><rect x="32.0" y="14.0" width="1" height="1"/><rect x="32.0" y="16.0" width="1" height="1"/><rect x="34.0" y="4.0" width="1" height="1"/><rect x="34.0" y="6.0" width="1" height="1"/><rect x="34.0" y="8.0" width="1" height="1"/><rect x="34.0" y="10.0" width="1" height="1"/><rect x="34.0" y="12.0" width="1" height="1"/><rect x="34.0" y="14.0" width="1" height="1"/><rect x="34.0" y="16.0" width="1" height="1"/><rect x="36.0" y="4.0" width="1" height="1"/><rect x="36.0" y="6.0" width="1" height="1"/><rect x="36.0" y="8.0" width="1" height="1"/><rect x="36.0" y="10.0" width="1" height="1"/><rect x="36.0" y="12.0" width="1" height="1"/><rect x="36.0" y="14.0" width="1" height="1"/><rect x="36.0" y="16.0" width="1" height="1"/><rect x="38.0" y="4.0" width="1" height="1"/><rect x="38.0" y="6.0" width="1" height="1"/><rect x="38.0" y="8.0" width="1" height="1"/><rect x="38.0" y="10.0" width="1" height="1"/><rect x="38.0" y="12.0" width="1" height="1"/><rect x="38.0" y="14.0" width="1" height="1"/><rect x="38.0" y="16.0" width="1" height="1"/><rect x="40.0" y="4.0" width="1" height="1"/><rect x="40.0" y="6.0" width="1" height="1"/><rect x="40.0" y="8.0" width="1" height="1"/><rect x="40.0" y="10.0" width="1" height="1"/><rect x="40.0" y="12.0" width="1" height="1"/><rect x="40.0" y="14.0" width="1" height="1"/><rect x="40.0" y="16.0" width="1" height="1"/><rect x="42.0" y="4.0" width="1" height="1"/><rect x="42.0" y="6.0" width="1" height="1"/><rect x="42.0" y="8.0" width="1" height="1"/><rect x="42.0" y="10.0" width="1" height="1"/><rect x="42.0" y="12.0" width="1" height="1"/><rect x="42.0" y="14.0" width="1" height="1"/><rect x="42.0" y="16.0" width="1" height="1"/><rect x="44.0" y="4.0" width="1" height="1"/><rect x="44.0" y="6.0" width="1" height="1"/><rect x="44.0" y="8.0" width="1" height="1"/><rect x="44.0" y="10.0" width="1" height="1"/><rect x="44.0" y="12.0" width="1" height="1"/><rect x="44.0" y="14.0" width="1" height="1"/><rect x="44.0" y="16.0" width="1" height="1"/><rect x="46.0" y="4.0" width="1" height="1"/><rect x="46.0" y="6.0" width="1" height="1"/><rect x="46.0" y="8.0" width="1" height="1"/><rect x="46.0" y="10.0" width="1" height="1"/><rect x="46.0" y="12.0" width="1" height="1"/><rect x="46.0" y="14.0" width="1" height="1"/><rect x="46.0" y="16.0" width="1" height="1"/><rect x="48.0" y="4.0" width="1" height="1"/><rect x="48.0" y="6.0" width="1" height="1"/><rect x="48.0" y="8.0" width="1" height="1"/><rect x="48.0" y="10.0" width="1" height="1"/><rect x="48.0" y="12.0" width="1" height="1"/><rect x="48.0" y="14.0" width="1" height="1"/><rect x="48.0" y="16.0" width="1" height="1"/><rect x="50.0" y="4.0" width="1" height="1"/><rect x="50.0" y="6.0" width="1" height="1"/><rect x="50.0" y="8.0" width="1" height="1"/><rect x="50.0" y="10.0" width="1" height="1"/><rect x="50.0" y="12.0" width="1" height="1"/><rect x="50.0" y="14.0" width="1" height="1"/><rect x="50.0" y="16.0" width="1" height="1"/><rect x="52.0" y="4.0" width="1" height="1"/><rect x="52.0" y="6.0" width="1" height="1"/><rect x="52.0" y="8.0" width="1" height="1"/><rect x="52.0" y="10.0" width="1" height="1"/><rect x="52.0" y="12.0" width="1" height="1"/><rect x="52.0" y="14.0" width="1" height="1"/><rect x="52.0" y="16.0" width="1" height="1"/><rect x="54.0" y="4.0" width="1" height="1"/><rect x="54.0" y="6.0" width="1" height="1"/><rect x="54.0" y="8.0" width="1" height="1"/><rect x="54.0" y="10.0" width="1" height="1"/><rect x="54.0" y="12.0" width="1" height="1"/><rect x="54.0" y="14.0" width="1" height="1"/><rect x="54.0" y="16.0" width="1" height="1"/><rect x="56.0" y="4.0" width="1" height="1"/><rect x="56.0" y="6.0" width="1" height="1"/><rect x="56.0" y="8.0" width="1" height="1"/><rect x="56.0" y="10.0" width="1" height="1"/><rect x="56.0" y="12.0" width="1" height="1"/><rect x="56.0" y="14.0" width="1" height="1"/><rect x="56.0" y="16.0" width="1" height="1"/><rect x="58.0" y="4.0" width="1" height="1"/><rect x="58.0" y="6.0" width="1" height="1"/><rect x="58.0" y="8.0" width="1" height="1"/><rect x="58.0" y="10.0" width="1" height="1"/><rect x="58.0" y="12.0" width="1" height="1"/><rect x="58.0" y="14.0" width="1" height="1"/><rect x="58.0" y="16.0" width="1" height="1"/><rect x="60.0" y="4.0" width="1" height="1"/><rect x="60.0" y="6.0" width="1" height="1"/><rect x="60.0" y="8.0" width="1" height="1"/><rect x="60.0" y="10.0" width="1" height="1"/><rect x="60.0" y="12.0" width="1" height="1"/><rect x="60.0" y="14.0" width="1" height="1"/><rect x="60.0" y="16.0" width="1" height="1"/><rect x="62.0" y="4.0" width="1" height="1"/><rect x="62.0" y="6.0" width="1" height="1"/><rect x="62.0" y="8.0" width="1" height="1"/><rect x="62.0" y="10.0" width="1" height="1"/><rect x="62.0" y="12.0" width="1" height="1"/><rect x="62.0" y="14.0" width="1" height="1"/><rect x="62.0" y="16.0" width="1" height="1"/><rect x="64.0" y="4.0" width="1" height="1"/><rect x="64.0" y="6.0" width="1" height="1"/><rect x="64.0" y="8.0" width="1" height="1"/><rect x="64.0" y="10.0" width="1" height="1"/><rect x="64.0" y="12.0" width="1" height="1"/><rect x="64.0" y="14.0" width="1" height="1"/><rect x="64.0" y="16.0" width="1" height="1"/><rect x="66.0" y="4.0" width="1" height="1"/><rect x="66.0" y="6.0" width="1" height="1"/><rect x="66.0" y="8.0" width="1" height="1"/><rect x="66.0" y="10.0" width="1" height="1"/><rect x="66.0" y="12.0" width="1" height="1"/><rect x="66.0" y="14.0" width="1" height="1"/><rect x="66.0" y="16.0" width="1" height="1"/><rect x="68.0" y="4.0" width="1" height="1"/><rect x="68.0" y="6.0" width="1" height="1"/><rect x="68.0" y="8.0" width="1" height="1"/><rect x="68.0" y="10.0" width="1" height="1"/><rect x="68.0" y="12.0" width="1" height="1"/><rect x="68.0" y="14.0" width="1" height="1"/><rect x="68.0" y="16.0" width="1" height="1"/><rect x="70.0" y="4.0" width="1" height="1"/><rect x="70.0" y="6.0" width="1" height="1"/><rect x="70.0" y="8.0" width="1" height="1"/><rect x="70.0" y="10.0" width="1" height="1"/><rect x="70.0" y="12.0" width="1" height="1"/><rect x="70.0" y="14.0" width="1" height="1"/><rect x="70.0" y="16.0" width="1" height="1"/><rect x="72.0" y="4.0" width="1" height="1"/><rect x="72.0" y="6.0" width="1" height="1"/><rect x="72.0" y="8.0" width="1" height="1"/><rect x="72.0" y="10.0" width="1" height="1"/><rect x="72.0" y="12.0" width="1" height="1"/><rect x="72.0" y="14.0" width="1" height="1"/><rect x="72.0" y="16.0" width="1" height="1"/><rect x="74.0" y="4.0" width="1" height="1"/><rect x="74.0" y="6.0" width="1" height="1"/><rect x="74.0" y="8.0" width="1" height="1"/><rect x="74.0" y="10.0" width="1" height="1"/><rect x="74.0" y="12.0" width="1" height="1"/><rect x="74.0" y="14.0" width="1" height="1"/><rect x="74.0" y="16.0" width="1" height="1"/><rect x="76.0" y="4.0" width="1" height="1"/><rect x="76.0" y="6.0" width="1" height="1"/><rect x="76.0" y="8.0" width="1" height="1"/><rect x="76.0" y="10.0" width="1" height="1"/><rect x="76.0" y="12.0" width="1" height="1"/><rect x="76.0" y="14.0" width="1" height="1"/><rect x="76.0" y="16.0" width="1" height="1"/><rect x="78.0" y="4.0" width="1" height="1"/><rect x="78.0" y="6.0" width="1" height="1"/><rect x="78.0" y="8.0" width="1" height="1"/><rect x="78.0" y="10.0" width="1" height="1"/><rect x="78.0" y="12.0" width="1" height="1"/><rect x="78.0" y="14.0" width="1" height="1"/><rect x="78.0" y="16.0" width="1" height="1"/><rect x="80.0" y="4.0" width="1" height="1"/><rect x="80.0" y="6.0" width="1" height="1"/><rect x="80.0" y="8.0" width="1" height="1"/><rect x="80.0" y="10.0" width="1" height="1"/><rect x="80.0" y="12.0" width="1" height="1"/><rect x="80.0" y="14.0" width="1" height="1"/><rect x="80.0" y="16.0" width="1" height="1"/><rect x="82.0" y="4.0" width="1" height="1"/><rect x="82.0" y="6.0" width="1" height="1"/><rect x="82.0" y="8.0" width="1" height="1"/><rect x="82.0" y="10.0" width="1" height="1"/><rect x="82.0" y="12.0" width="1" height="1"/><rect x="82.0" y="14.0" width="1" height="1"/><rect x="82.0" y="16.0" width="1" height="1"/><rect x="84.0" y="4.0" width="1" height="1"/><rect x="84.0" y="6.0" width="1" height="1"/><rect x="84.0" y="8.0" width="1" height="1"/><rect x="84.0" y="10.0" width="1" height="1"/><rect x="84.0" y="12.0" width="1" height="1"/><rect x="84.0" y="14.0" width="1" height="1"/><rect x="84.0" y="16.0" width="1" height="1"/><rect x="86.0" y="4.0" width="1" height="1"/><rect x="86.0" y="6.0" width="1" height="1"/><rect x="86.0" y="8.0" width="1" height="1"/><rect x="86.0" y="10.0" width="1" height="1"/><rect x="86.0" y="12.0" width="1" height="1"/><rect x="86.0" y="14.0" width="1" height="1"/><rect x="86.0" y="16.0" width="1" height="1"/><rect x="88.0" y="4.0" width="1" height="1"/><rect x="88.0" y="6.0" width="1" height="1"/><rect x="88.0" y="8.0" width="1" height="1"/><rect x="88.0" y="10.0" width="1" height="1"/><rect x="88.0" y="12.0" width="1" height="1"/><rect x="88.0" y="14.0" width="1" height="1"/><rect x="88.0" y="16.0" width="1" height="1"/><rect x="90.0" y="4.0" width="1" height="1"/><rect x="90.0" y="6.0" width="1" height="1"/><rect x="90.0" y="8.0" width="1" height="1"/><rect x="90.0" y="10.0" width="1" height="1"/><rect x="90.0" y="12.0" width="1" height="1"/><rect x="90.0" y="14.0" width="1" height="1"/><rect x="90.0" y="16.0" width="1" height="1"/><rect x="92.0" y="4.0" width="1" height="1"/><rect x="92.0" y="6.0" width="1" height="1"/><rect x="92.0" y="8.0" width="1" height="1"/><rect x="92.0" y="10.0" width="1" height="1"/><rect x="92.0" y="12.0" width="1" height="1"/><rect x="92.0" y="14.0" width="1" height="1"/><rect x="92.0" y="16.0" width="1" height="1"/><rect x="94.0" y="4.0" width="1" height="1"/><rect x="94.0" y="6.0" width="1" height="1"/><rect x="94.0" y="8.0" width="1" height="1"/><rect x="94.0" y="10.0" width="1" height="1"/><rect x="94.0" y="12.0" width="1" height="1"/><rect x="94.0" y="14.0" width="1" height="1"/><rect x="94.0" y="16.0" width="1" height="1"/><rect x="96.0" y="4.0" width="1" height="1"/><rect x="96.0" y="6.0" width="1" height="1"/><rect x="96.0" y="8.0" width="1" height="1"/><rect x="96.0" y="10.0" width="1" height="1"/><rect x="96.0" y="12.0" width="1" height="1"/><rect x="96.0" y="14.0" width="1" height="1"/><rect x="96.0" y="16.0" width="1" height="1"/><rect x="98.0" y="4.0" width="1" height="1"/><rect x="98.0" y="6.0" width="1" height="1"/><rect x="98.0" y="8.0" width="1" height="1"/><rect x="98.0" y="10.0" width="1" height="1"/><rect x="98.0" y="12.0" width="1" height="1"/><rect x="98.0" y="14.0" width="1" height="1"/><rect x="98.0" y="16.0" width="1" height="1"/><rect x="100.0" y="4.0" width="1" height="1"/><rect x="100.0" y="6.0" width="1" height="1"/><rect x="100.0" y="8.0" width="1" height="1"/><rect x="100.0" y="10.0" width="1" height="1"/><rect x="100.0" y="12.0" width="1" height="1"/><rect x="100.0" y="14.0" width="1" height="1"/><rect x="100.0" y="16.0" width="1" height="1"/><rect x="102.0" y="4.0" width="1" height="1"/><rect x="102.0" y="6.0" width="1" height="1"/><rect x="102.0" y="8.0" width="1" height="1"/><rect x="102.0" y="10.0" width="1" height="1"/><rect x="102.0" y="12.0" width="1" height="1"/><rect x="102.0" y="14.0" width="1" height="1"/><rect x="102.0" y="16.0" width="1" height="1"/></g><g fill="#f0f0e0"><rect x="4.0" y="4.0" width="1" height="1"/><rect x="6.0" y="4.0" width="1" height="1"/><rect x="2.0" y="6.0" width="1" height="1"/><rect x="8.0" y="6.0" width="1" height="1"/><rect x="2.0" y="8.0" width="1" height="1"/><rect x="8.0" y="8.0" width="1" height="1"/><rect x="2.0" y="10.0" width="1" height="1"/><rect x="8.0" y="10.0" width="1" height="1"/><rect x="2.0" y="12.0" width="1" height="1"/><rect x="8.0" y="12.0" width="1" height="1"/><rect x="2.0" y="14.0" width="1" height="1"/><rect x="8.0" y="14.0" width="1" height="1"/><rect x="4.0" y="16.0" width="1" height="1"/><rect x="6.0" y="16.0" width="1" height="1"/><rect x="16.0" y="4.0" width="1" height="1"/><rect x="18.0" y="4.0" width="1" height="1"/><rect x="14.0" y="6.0" width="1" height="1"/><rect x="20.0" y="6.0" width="1" height="1"/><rect x="14.0" y="8.0" width="1" height="1"/><rect x="20.0" y="8.0" width="1" height="1"/><rect x="14.0" y="10.0" width="1" height="1"/><rect x="20.0" y="10.0" width="1" height="1"/><rect x="14.0" y="12.0" width="1" height="1"/><rect x="20.0" y="12.0" width="1" height="1"/><rect x="14.0" y="14.0" width="1" height="1"/><rect x="20.0" y="14.0" width="1" height="1"/><rect x="16.0" y="16.0" width="1" height="1"/><rect x="18.0" y="16.0" width="1" height="1"/><rect x="30.0" y="8.0" width="1" height="1"/><rect x="30.0" y="14.0" width="1" height="1"/><rect x="40.0" y="4.0" width="1" height="1"/><rect x="42.0" y="4.0" width="1" height="1"/><rect x="38.0" y="6.0" width="1" height="1"/><rect x="44.0" y="6.0" width="1" height="1"/><rect x="38.0" y="8.0" width="1" height="1"/><rect x="44.0" y="8.0" width="1" height="1"/><rect x="38.0" y="10.0" width="1" height="1"/><rect x="44.0" y="10.0" width="1" height="1"/><rect x="38.0" y="12.0" width="1" height="1"/><rect x="44.0" y="12.0" width="1" height="1"/><rect x="38.0" y="14.0" width="1" height="1"/><rect x="44.0" y="14.0" width="1" height="1"/><rect x="40.0" y="16.0" width="1" height="1"/><rect x="42.0" y="16.0" width="1" height="1"/><rect x="52.0" y="4.0" width="1" height="1"/><rect x="54.0" y="4.0" width="1" height="1"/><rect x="50.0" y="6.0" width="1" height="1"/><rect x="56.0" y="6.0" width="1" height="1"/><rect x="50.0" y="8.0" width="1" height="1"/><rect x="56.0" y="8.0" width="1" height="1"/><rect x="50.0" y="10.0" width="1" height="1"/><rect x="56.0" y="10.0" width="1" height="1"/><rect x="50.0" y="12.0" width="1" height="1"/><rect x="56.0" y="12.0" width="1" height="1"/><rect x="50.0" y="14.0" width="1" height="1"/><rect x="56.0" y="14.0" width="1" height="1"/><rect x="52.0" y="16.0" width="1" height="1"/><rect x="54.0" y="16.0" width="1" height="1"/><rect x="66.0" y="8.0" width="1" height="1"/><rect x="66.0" y="14.0" width="1" height="1"/><rect x="76.0" y="4.0" width="1" height="1"/><rect x="78.0" y="4.0" width="1" height="1"/><rect x="74.0" y="6.0" width="1" height="1"/><rect x="80.0" y="6.0" width="1" height="1"/><rect x="74.0" y="8.0" width="1" height="1"/><rect x="80.0" y="8.0" width="1" height="1"/><rect x="74.0" y="10.0" width="1" height="1"/><rect x="80.0" y="10.0" width="1" height="1"/><rect x="74.0" y="12.0" width="1" height="1"/><rect x="80.0" y="12.0" width="1" height="1"/><rect x="74.0" y="14.0" width="1" height="1"/><rect x="80.0" y="14.0" width="1" height="1"/><rect x="76.0" y="16.0" width="1" height="1"/><rect x="78.0" y="16.0" width="1" height="1"/><rect x="88.0" y="4.0" width="1" height="1"/><rect x="86.0" y="6.0" width="1" height="1"/><rect x="88.0" y="6.0" width="1" height="1"/><rect x="88.0" y="8.0" width="1" height="1"/><rect x="88.0" y="10.0" width="1" height="1"/><rect x="88.0" y="12.0" width="1" height="1"/><rect x="88.0" y="14.0" width="1" height="1"/><rect x="86.0" y="16.0" width="1" height="1"/><rect x="88.0" y="16.0" width="1" height="1"/><rect x="90.0" y="16.0" width="1" height="1"/></g></svg>
<div class="a" style="left:723px;top:130px;width:1px;height:386px;background:#fff"></div>
<div class="a" style="left:724px;top:130px;width:71px;height:386px;background:#aaaaaa;border-top:1px solid #dadada"></div>
<div class="a" style="left:794px;top:129px;width:2px;height:474px;background:#fff"></div>
<svg style="left:733.4px;top:139.6px" width="14" height="14"><circle cx="7" cy="7" r="6.1" fill="#c4c4c4" stroke="#f4f4f4" stroke-width="1.15"/></svg>
<div class="t" style="top:140.92px;font-size:12.5px;color:#8c8c8c;left:752px;">API</div>
<svg style="left:733.7px;top:161.5px" width="14" height="14"><circle cx="7" cy="7" r="6.1" fill="#f4f4f4" stroke="#f4f4f4" stroke-width="1.15"/></svg>
<div class="t" style="top:162.72px;font-size:12.5px;color:#8c8c8c;left:752px;">PIO</div>
<div class="a" style="left:732px;top:191px;width:19px;height:10px;background:#808080;border:1px solid #1a1a1a"></div>
<div class="a" style="left:732px;top:222px;width:55px;height:21px;background:#e4e4e4"></div>
<div class="t" style="top:226.92px;font-size:12.5px;color:#000;left:759.5px;transform:translateX(-50%);"><u>S</u>leep</div>
<div class="a" style="left:732px;top:284.4px;width:55px;height:20.5px;background:#e4e4e4"></div>
<div class="t" style="top:289.32px;font-size:12.5px;color:#000;left:759.5px;transform:translateX(-50%);">Re<u>c</u>all</div>
<div class="a" style="left:732px;top:470px;width:55px;height:21px;background:#e4e4e4"></div>
<div class="t" style="top:474.92px;font-size:12.5px;color:#000;left:759.5px;transform:translateX(-50%);">Passp</div>
<div class="a" style="left:730px;top:400.5px;width:27px;height:12px;background:#a4a4a4;border:1px solid #303030;border-radius:2px"></div>
<div class="t" style="top:402.88px;font-size:9px;color:#c0c0c0;font-weight:700;left:743.5px;transform:translateX(-50%);">WR</div>
<div class="a" style="left:762px;top:400.5px;width:27px;height:12px;background:#a4a4a4;border:1px solid #303030;border-radius:2px"></div>
<div class="t" style="top:402.88px;font-size:9px;color:#c0c0c0;font-weight:700;left:775.5px;transform:translateX(-50%);">RD</div>
<div class="a" style="left:1px;top:516px;width:795px;height:5px;background:#f0f0f0"></div>
<div class="a" style="left:1px;top:514px;width:422px;height:2px;background:#fff"></div>
<div class="a" style="left:2px;top:521px;width:720px;height:1px;background:#606060"></div>
<div class="a" style="left:2px;top:522px;width:719px;height:81px;background:#f5fcf4"></div>
<div class="a" style="left:2px;top:542px;width:703px;height:1px;background:#e4ece4"></div>
<div class="a" style="left:2px;top:562px;width:703px;height:1px;background:#e4ece4"></div>
<div class="a" style="left:2px;top:582px;width:703px;height:1px;background:#e4ece4"></div>
<div class="a" style="left:72px;top:522px;width:1px;height:81px;background:#e4ece4"></div>
<div class="t" style="top:527.40px;font-size:13px;color:#000;right:738.8px;letter-spacing:0.1px;">9:30:28</div>
<div class="t" style="top:527.40px;font-size:13px;color:#000;left:79.8px;letter-spacing:-0.15px;">Starting Reading, LBA=0..976773167, FULL, sequential access, timeout 10000ms</div>
<div class="t" style="top:546.90px;font-size:13px;color:#000;right:734.3px;letter-spacing:0.1px;">10:51:45</div>
<div class="t" style="top:548.05px;font-size:14px;color:#000;left:79.5px;letter-spacing:1.6px;">***</div>
<div class="t" style="top:546.90px;font-size:13px;color:#000;left:107.7px;">Scan results: no warnings, no errors. Last block at 976773167 (500 GB), time 1 hours 21 minutes 17...</div>
<div class="t" style="top:566.80px;font-size:13px;color:#000;right:734.3px;letter-spacing:0.1px;">10:51:45</div>
<div class="t" style="top:566.80px;font-size:13px;color:#1a1a8a;left:79.8px;letter-spacing:-0.15px;">Speed: Maximum 132 MB/s. Average 99 MB/s. Minimum 67 MB/s. 423 points.</div>
<div class="a" style="left:705px;top:522px;width:16px;height:81px;background:#f0f0f0"></div>
<div class="a" style="left:706px;top:568px;width:14px;height:16px;background:#cdcdcd"></div>
<svg style="left:709px;top:529px" width="9" height="6"><path d="M0.8 5L4.5 1.3 8.2 5" fill="none" stroke="#404040" stroke-width="1.7"/></svg>
<svg style="left:709px;top:591px" width="9" height="6"><path d="M0.8 1L4.5 4.7 8.2 1" fill="none" stroke="#404040" stroke-width="1.7"/></svg>
<div class="a" style="left:722px;top:521px;width:1px;height:82px;background:#fff"></div>
<div class="a" style="left:723px;top:521px;width:71px;height:82px;background:#aaaaaa"></div>
<svg style="left:732.5px;top:530.5px" width="13" height="13"><rect x="0.5" y="0.5" width="12" height="12" fill="#fff" stroke="#333"/><path d="M3 6.5l2.5 2.5 4.5-5" fill="none" stroke="#000" stroke-width="1.1"/></svg>
<div class="t" style="top:530.37px;font-size:12.2px;color:#000;left:750.3px;">Sound</div>
<div class="a" style="left:732.5px;top:554px;width:13px;height:13px;background:#fff;border:1px solid #333"></div>
<div class="t" style="top:553.67px;font-size:12.2px;color:#000;left:750.3px;">Hints</div>
<div class="a" style="left:1px;top:603px;width:796px;height:2px;background:#3a3a3a"></div>
<div class="t" style="left:345.4px;top:317.5px;font-size:112px;font-weight:bold;color:rgba(255,255,255,0.29);transform-origin:0 0;transform:scaleX(0.856)">a</div>
<div class="t" style="left:402.3px;top:317.5px;font-size:112px;font-weight:bold;color:rgba(255,255,255,0.29);transform-origin:0 0;transform:scaleX(0.962)">u</div>
<div class="t" style="left:499px;top:317.5px;font-size:112px;font-weight:bold;color:rgba(255,255,255,0.29);transform-origin:0 0;transform:scaleX(1.0)">r</div>
<div class="t" style="left:541px;top:317.5px;font-size:112px;font-weight:bold;color:rgba(255,255,255,0.29);transform-origin:0 0;transform:scaleX(1.0)">u</div>
<div class="a" style="left:473px;top:391px;width:19px;height:19px;border-radius:6px;background:rgba(255,255,255,0.29)"></div>
<div class="t" style="left:357px;top:425px;font-size:28px;color:rgba(255,255,255,0.23);letter-spacing:0.17px">интернет-аукцион</div>
</body></html>
